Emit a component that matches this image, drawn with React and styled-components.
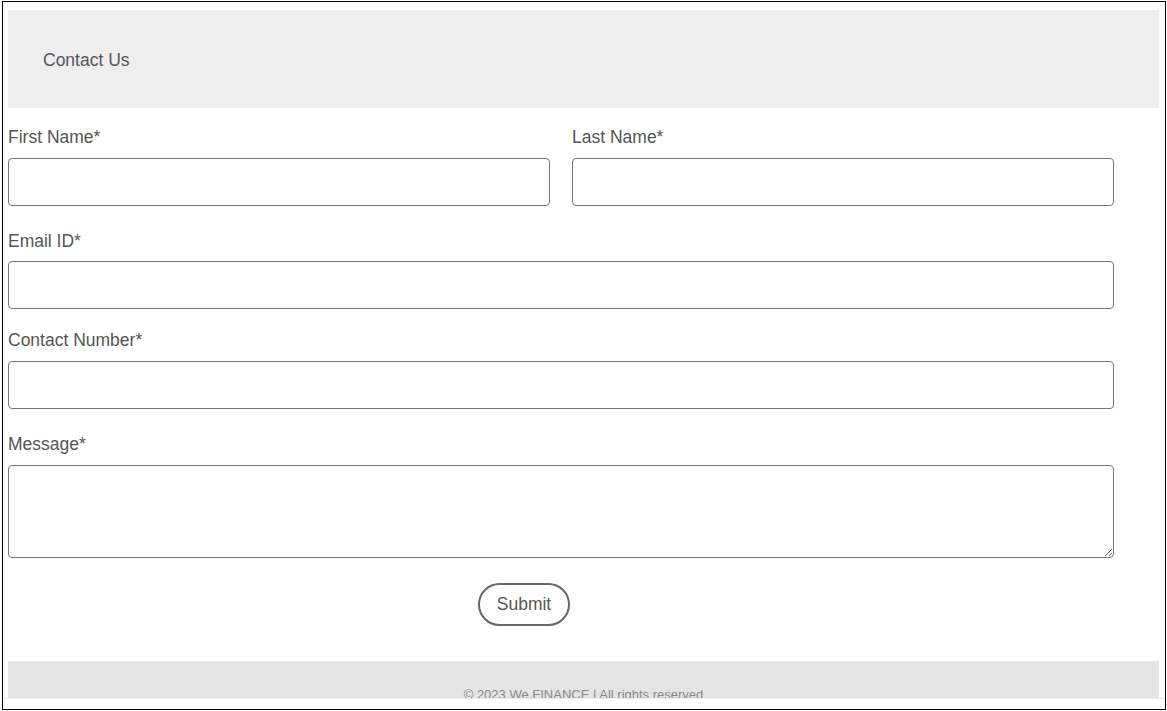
import React from "react";
import styled, { createGlobalStyle } from "styled-components";

const Global = createGlobalStyle`
  html, body { margin: 0; padding: 0; background: #fff; }
  body { font-family: "Liberation Sans", Arial, sans-serif; }
  * { box-sizing: border-box; }
`;

const Frame = styled.div`
  margin: 1px 1px 0 2px;
  width: 1164px;
  height: 709px;
  border: 1px solid #000;
  background: #fff;
`;

const Viewport = styled.div`
  height: 697px;
  overflow: hidden;
  padding: 8px 6px 0 5px;
  border-bottom: 1px solid #ececec;
`;

const Header = styled.header`
  height: 98px;
  background: #eeeeee;
  display: flex;
  align-items: center;
  padding: 2px 0 0 35px;
  color: #555;
  font-size: 17.5px;
`;

const Form = styled.form`
  width: 1106px;
  padding-top: 18px;
  display: flex;
  flex-direction: column;
`;

const Row = styled.div`
  display: grid;
  grid-template-columns: ${(p) => (p.$cols === 2 ? "1fr 1fr" : "1fr")};
  column-gap: 22px;
  margin-top: ${(p) => p.$top || 0}px;
`;

const Field = styled.div`
  display: flex;
  flex-direction: column;
`;

const Label = styled.label`
  display: block;
  height: 20px;
  line-height: 20px;
  padding-top: 1px;
  font-size: 17.5px;
  color: #555;
  margin-bottom: ${(p) => p.$gap || 12}px;
`;

const Input = styled.input`
  display: block;
  width: 100%;
  height: 48px;
  border: 1px solid #767676;
  border-radius: 4px;
  background: #fff;
  font: inherit;
  padding: 0 8px;
  outline: none;
`;

const TextArea = styled.textarea`
  display: block;
  width: 100%;
  height: 93px;
  border: 1px solid #767676;
  border-radius: 4px;
  background: #fff;
  font: inherit;
  padding: 8px;
  outline: none;
  resize: vertical;
`;

const Actions = styled.div`
  display: flex;
  padding-top: 26px;
  padding-left: 470px;
`;

const Submit = styled.button`
  width: 92px;
  height: 43px;
  margin-top: -1px;
  border: 2px solid #666;
  border-radius: 22px;
  background: #fff;
  color: #555;
  font-family: "Liberation Sans", Arial, sans-serif;
  font-size: 17.5px;
  cursor: pointer;
`;

const Footer = styled.footer`
  margin-top: 35px;
  height: 60px;
  background: #e4e4e4;
  text-align: center;
  padding-top: 26px;
  font-size: 13px;
  line-height: 16px;
  color: #888;
`;

export default function App() {
  return (
    <>
      <Global />
      <Frame>
        <Viewport>
          <Header>Contact Us</Header>
          <Form onSubmit={(e) => e.preventDefault()}>
            <Row $cols={2}>
              <Field>
                <Label>First Name*</Label>
                <Input type="text" />
              </Field>
              <Field>
                <Label>Last Name*</Label>
                <Input type="text" />
              </Field>
            </Row>
            <Row $top={24}>
              <Field>
                <Label $gap={11}>Email ID*</Label>
                <Input type="email" />
              </Field>
            </Row>
            <Row $top={20}>
              <Field>
                <Label>Contact Number*</Label>
                <Input type="tel" />
              </Field>
            </Row>
            <Row $top={24}>
              <Field>
                <Label>Message*</Label>
                <TextArea />
              </Field>
            </Row>
            <Actions>
              <Submit type="submit">Submit</Submit>
            </Actions>
          </Form>
          <Footer>© 2023 We.FINANCE | All rights reserved</Footer>
        </Viewport>
      </Frame>
    </>
  );
}
